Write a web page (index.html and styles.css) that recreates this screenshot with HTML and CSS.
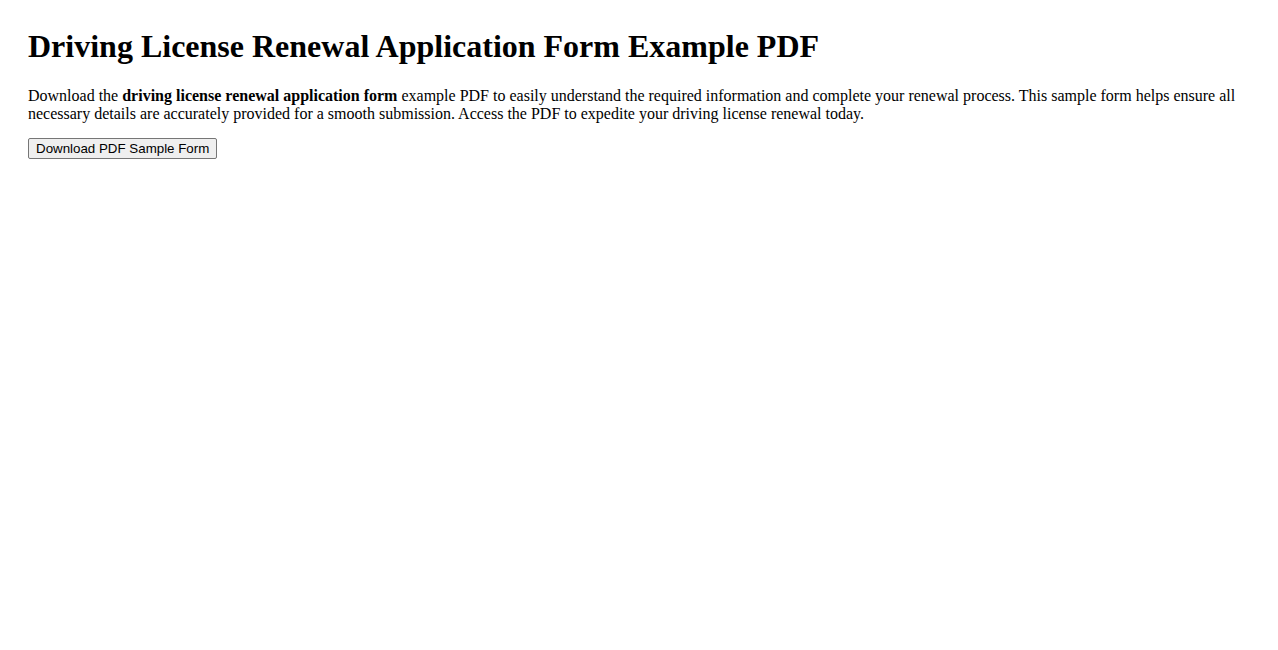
FILE: index.html
```html
<!DOCTYPE html>
<html lang="en">
<head>
<meta charset="utf-8">
<title>Driving License Renewal Application Form Example PDF</title>
<link rel="stylesheet" href="styles.css">
</head>
<body>
<div class="page">
<h1 class="title">Driving License Renewal Application Form Example PDF</h1>
<p class="intro">Download the <strong>driving license renewal application form</strong> example PDF to easily understand the required information and complete your renewal process. This sample form helps ensure all necessary details are accurately provided for a smooth submission. Access the PDF to expedite your driving license renewal today.</p>
<button class="download" type="button">Download PDF Sample Form</button>
</div>
</body>
</html>
```

FILE: styles.css
```css
html, body {
  margin: 0;
  padding: 0;
  background: #ffffff;
}
body {
  font-family: "Liberation Serif", "Times New Roman", serif;
  font-size: 16px;
  color: #000000;
}
.page {
  padding: 28px 28px;
}
.title {
  font-size: 32px;
  font-weight: bold;
  margin: 0 0 22px 0;
}
.intro {
  margin: 0 0 15px 0;
  line-height: 18px;
}
.download {
  font-family: "Liberation Sans", Arial, sans-serif;
  font-size: 13.33px;
  color: #000;
  background: #efefef;
  border: 1px solid #767676;
  border-radius: 2px;
  padding: 1px 7px;
  height: 21px;
}
```
